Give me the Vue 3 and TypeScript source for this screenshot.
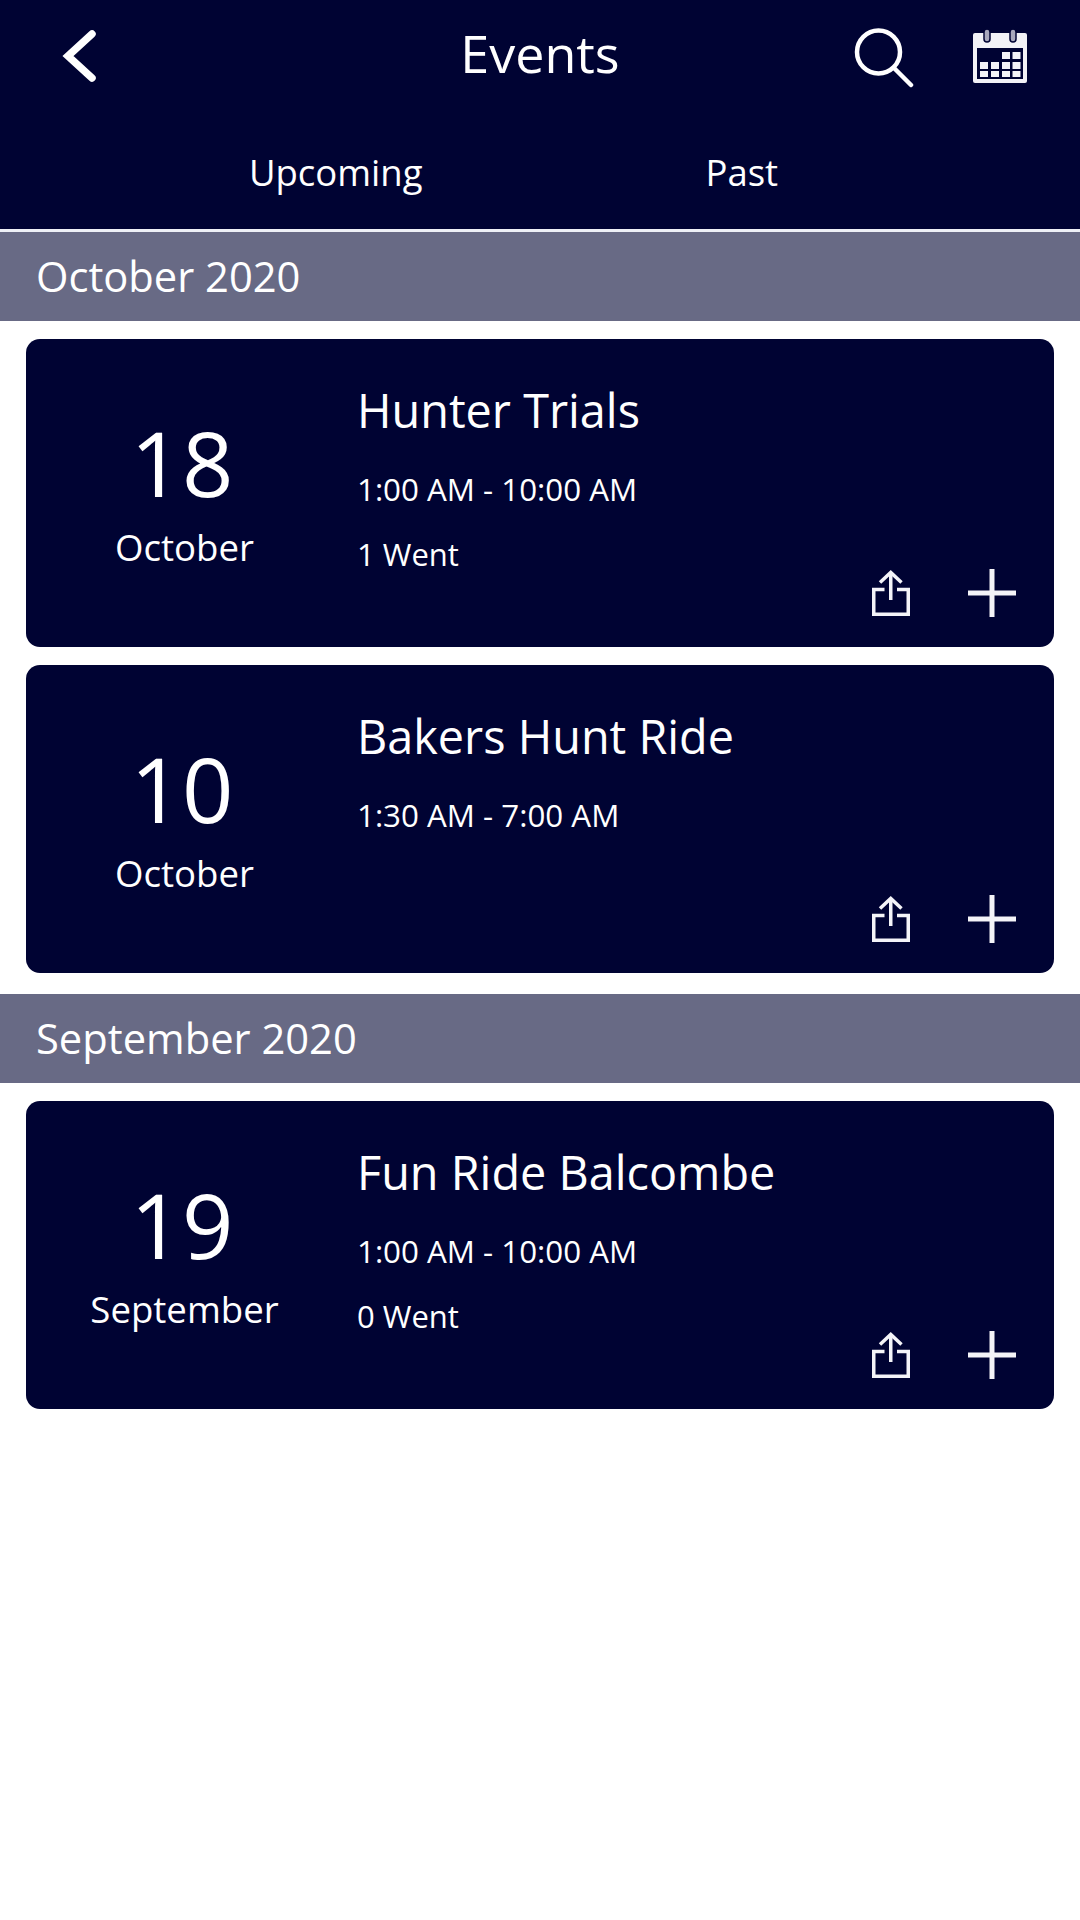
<script setup lang="ts">
interface Ev { day: string; month: string; title: string; time: string; went?: string }
interface Section { label: string; events: Ev[] }
const sections: Section[] = [
  { label: 'October 2020', events: [
    { day: '18', month: 'October', title: 'Hunter Trials', time: '1:00 AM - 10:00 AM', went: '1 Went' },
    { day: '10', month: 'October', title: 'Bakers Hunt Ride', time: '1:30 AM - 7:00 AM' },
  ] },
  { label: 'September 2020', events: [
    { day: '19', month: 'September', title: 'Fun Ride Balcombe', time: '1:00 AM - 10:00 AM', went: '0 Went' },
  ] },
]
</script>

<template>
  <div class="page">
    <header class="header">
      <div class="top">
        <svg class="back" width="36" height="54" viewBox="0 0 36 54"><path d="M31 5 L7 27 L31 49" fill="none" stroke="#fff" stroke-width="7.500" stroke-linecap="round" stroke-linejoin="miter"/></svg>
        <h1 class="title">Events</h1>
        <div class="top-icons">
          <svg width="60" height="60" viewBox="0 0 60 60"><circle cx="24.500" cy="24" r="21.500" fill="none" stroke="#fff" stroke-width="4.500"/><path d="M40 40 L57 57" stroke="#fff" stroke-width="4.500" stroke-linecap="round"/></svg>
          <svg class="cal" width="54" height="54" viewBox="0 0 54 54">
            <path d="M2 4h50a2 2 0 0 1 2 2v46a2 2 0 0 1-2 2H2a2 2 0 0 1-2-2V6a2 2 0 0 1 2-2z" fill="#f2f2f6"/>
            <rect x="4" y="19" width="46" height="31" fill="#000333"/>
            <rect x="11" y="0" width="6" height="13" rx="3" fill="#a8a8bc" stroke="#000333" stroke-width="1.500"/>
            <rect x="37" y="0" width="6" height="13" rx="3" fill="#a8a8bc" stroke="#000333" stroke-width="1.500"/>
            <g fill="#f4f4f8">
              <rect x="29" y="23" width="8" height="7"/><rect x="39.500" y="23" width="8" height="7"/>
              <rect x="7" y="33" width="8" height="7"/><rect x="18" y="33" width="8" height="7"/><rect x="29" y="33" width="8" height="7"/><rect x="39.500" y="33" width="8" height="7"/>
              <rect x="7" y="42" width="8" height="6"/><rect x="18" y="42" width="8" height="6"/><rect x="29" y="42" width="8" height="6"/><rect x="39.500" y="42" width="8" height="6"/>
            </g>
          </svg>
        </div>
      </div>
      <nav class="tabs">
        <span class="tab">Upcoming</span>
        <span class="tab">Past</span>
      </nav>
    </header>

    <section v-for="s in sections" :key="s.label" class="section">
      <div class="band">{{ s.label }}</div>
      <div class="cards">
        <article v-for="e in s.events" :key="e.title" class="card">
          <div class="date">
            <div class="day">{{ e.day }}</div>
            <div class="month">{{ e.month }}</div>
          </div>
          <div class="info">
            <div class="name">{{ e.title }}</div>
            <div class="time">{{ e.time }}</div>
            <div v-if="e.went" class="went">{{ e.went }}</div>
          </div>
          <div class="actions">
            <svg class="share" width="38" height="46" viewBox="0 0 38 46" fill="none" stroke="#f4f4f8" stroke-width="3.500"><path d="M12.500 19.500H1.750v24.750h34.500V19.500H25"/><path d="M18.750 30V3"/><path d="M8 12.500 18.750 2.500 29.500 12.500"/></svg>
            <svg width="48" height="48" viewBox="0 0 48 48" fill="none" stroke="#f4f4f8" stroke-width="5"><path d="M24 0v48M0 24h48"/></svg>
          </div>
        </article>
      </div>
    </section>
  </div>
</template>

<style>
html, body { margin: 0; background: #fff; }
</style>

<style scoped>
.page {
  width: 1080px;
  height: 1920px;
  background: #fff;
  font-family: "Open Sans", "Noto Sans", sans-serif;
  color: #fff;
  overflow: hidden;
}
.header {
  height: 229px;
  background: #000333;
  border-bottom: 3px solid #eef0f6;
}
.top {
  position: relative;
  height: 112px;
  display: flex;
  justify-content: center;
}
.back { position: absolute; left: 61px; top: 29px; }
.title { margin: 0; font-size: 52px; font-weight: 400; line-height: 105px; }
.top-icons {
  position: absolute;
  right: 53px;
  top: 28px;
  display: flex;
  gap: 59px;
  align-items: flex-start;
}
.cal { margin-top: 1px; }
.tabs { display: flex; justify-content: center; gap: 283px; padding-right: 53px; padding-top: 30px; }
.tab { font-size: 36.500px; line-height: 60px; }
.band {
  height: 89px;
  background: #686a85;
  padding-left: 36px;
  font-size: 41.700px;
  line-height: 87px;
}
.cards {
  padding: 18px 26px 21px;
  display: flex;
  flex-direction: column;
  gap: 18px;
}
.card {
  position: relative;
  height: 308px;
  background: #000333;
  border-radius: 14px;
  display: flex;
}
.date { width: 317px; flex: none; display: flex; flex-direction: column; align-items: center; padding-top: 71px; box-sizing: border-box; }
.day { font-size: 90px; line-height: 104px; margin-right: 5px; }
.month { font-size: 36.600px; line-height: 50px; margin-top: 8px; }
.info { margin-left: 14px; padding-top: 40px; }
.name { font-size: 46.800px; line-height: 62px; }
.time { font-size: 31.300px; line-height: 44px; margin-top: 26px; }
.went { font-size: 31px; line-height: 44px; margin-top: 21px; }
.actions {
  position: absolute;
  right: 38px;
  bottom: 30px;
  display: flex;
  gap: 58px;
  align-items: flex-end;
}
.share { margin-bottom: 1px; }
</style>
